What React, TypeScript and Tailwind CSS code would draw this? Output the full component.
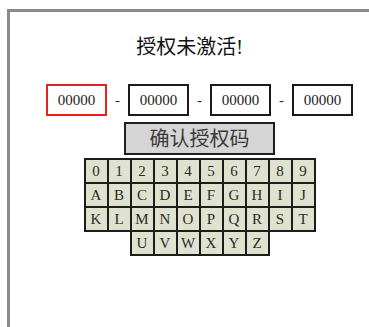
import React from "react";

const serif = '"Liberation Serif", "Noto Sans CJK SC", serif';

const rows: { keys: string[]; offset: number }[] = [
  { keys: ["0", "1", "2", "3", "4", "5", "6", "7", "8", "9"], offset: 0 },
  { keys: ["A", "B", "C", "D", "E", "F", "G", "H", "I", "J"], offset: 0 },
  { keys: ["K", "L", "M", "N", "O", "P", "Q", "R", "S", "T"], offset: 0 },
  { keys: ["U", "V", "W", "X", "Y", "Z"], offset: 2 },
];

function CodeBox({ active }: { active?: boolean }) {
  return (
    <div
      className={`w-[61px] h-[32px] flex items-center justify-center border-2 bg-white text-[15px] text-[#222] ${
        active ? "border-[#e8231f]" : "border-[#1a1a1a]"
      }`}
    >
      00000
    </div>
  );
}

function Dash() {
  return (
    <div className="w-[21px] flex items-center justify-center text-[15px] text-[#333]">-</div>
  );
}

export default function App() {
  return (
    <div className="w-[369px] h-[327px] bg-white overflow-hidden" style={{ fontFamily: serif }}>
      <div className="ml-[7px] mt-[9px] h-[318px] border-t-[3px] border-l-[3px] border-[#8a8a8a]">
        <div className="pt-[23px] text-center text-[20px] leading-[24px] text-[#111]">授权未激活!</div>
        <div className="pl-[35px] mt-[25px] w-[344px] flex flex-col items-center">
          <div className="flex">
            <CodeBox active />
            <Dash />
            <CodeBox />
            <Dash />
            <CodeBox />
            <Dash />
            <CodeBox />
          </div>
          <div className="mt-[6px] w-[151px] h-[33px] border-2 border-[#1f1f1f] bg-[#d5d5d5] flex items-center justify-center text-[20px] text-[#3a3a3a]">
            确认授权码
          </div>
          <div className="mt-[3px] flex flex-col">
            {rows.map((r, i) => (
              <div key={i} className={`flex ${i > 0 ? "-mt-[2px]" : ""}`}>
                {r.offset === 2 && <div className="w-[46px]" />}
                {r.keys.map((k, j) => (
                  <div
                    key={k}
                    className={`w-[25px] h-[26px] border-2 border-[#1c1c1c] bg-[#dfe2cf] flex items-center justify-center text-[15px] text-[#2a2a2a] ${
                      j > 0 ? "-ml-[2px]" : ""
                    }`}
                  >
                    {k}
                  </div>
                ))}
              </div>
            ))}
          </div>
        </div>
      </div>
    </div>
  );
}
